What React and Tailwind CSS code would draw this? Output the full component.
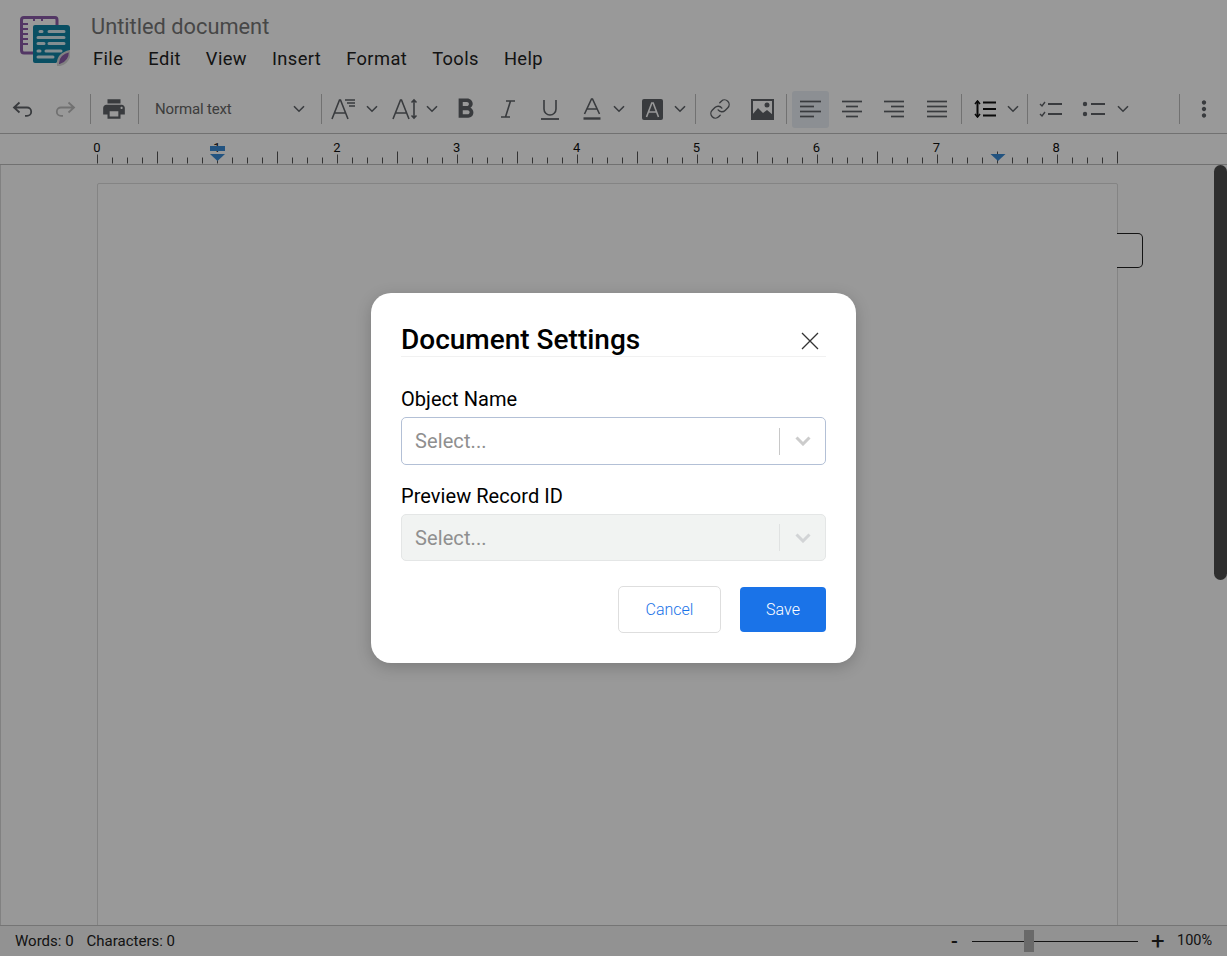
import React from "react";
import { MdPrint, MdFormatBold, MdMoreVert } from "react-icons/md";
import { Link as LinkIcon } from "lucide-react";

const ic = "#5f6368";
const Sep = ({ className = "" }) => <div className={`h-[30px] w-px shrink-0 bg-[#bdbdbd] ${className}`} />;
const Chev = ({ className = "" }) => (
  <svg viewBox="0 0 12 8" className={`h-2 w-3 shrink-0 ${className}`} fill="none" stroke="#5f6368" strokeWidth="1.6"><path d="M1 1.2 6 6.2 11 1.2" /></svg>
);

function Logo() {
  return (
    <svg viewBox="0 0 50 50" className="h-[50px] w-[50px] shrink-0">
      <path d="M1.500 34V4Q1.500 1.500 4 1.500H35Q37 1.500 37 4V9" fill="none" stroke="#8a5ca8" strokeWidth="3" />
      <path d="M1.500 34Q1.500 37 4 37H13" fill="none" stroke="#8a5ca8" strokeWidth="3" />
      <g stroke="#8a5ca8" strokeWidth="2"><path d="M1 8h7M1 13h7M1 18h7M1 23h7M1 28h7M14 1v4M22 1v4" /></g>
      <path d="M13 11Q13 9 15 9H47Q50 9 50 12V34L36 47H15Q13 47 13 45Z" fill="#0f84a6" />
      <g stroke="#fff" strokeOpacity="0.85" strokeWidth="3" strokeLinecap="round" fill="none">
        <path d="M20 15.500h2M29 15.500h15M18 21.500h26M29 27.500h15M18 27.500h6M18 35h2M26 35h15M18 41h15" />
      </g>
      <path d="M38 49Q37 38 50 35Q50 46 40 49Z" fill="#8a5ca8" stroke="#d8d8d8" strokeWidth="2" />
    </svg>
  );
}

function Ruler() {
  const ticks = [];
  for (let i = 0; i <= 68; i++) {
    const x = 97 + i * 15;
    const h = i % 8 === 0 ? 9 : i % 4 === 0 ? 12 : 6;
    ticks.push(<path key={i} d={`M${x + 0.5} ${29.5 - h}V29.5`} stroke="#555" strokeWidth="1" />);
  }
  return (
    <svg width="1227" height="30" className="block">
      {ticks}
      {[0, 1, 2, 3, 4, 5, 6, 7, 8].map((n) => (
        <text key={n} x={97 + n * 119.9} y="17.500" textAnchor="middle" fontSize="13" fontFamily="Roboto, sans-serif" fill="#111">{n}</text>
      ))}
      <rect x="210" y="12" width="15" height="5" fill="#3a8ad6" />
      <path d="M210 20H225L217.500 27Z" fill="#3a8ad6" />
      <path d="M990.500 20H1005.500L998 27Z" fill="#3a8ad6" />
    </svg>
  );
}

const Cell = ({ className = "", children }) => <div className={`flex h-[38px] shrink-0 items-center justify-center ${className}`}>{children}</div>;

const Align = ({ lines }) => (
  <svg viewBox="0 0 22 18" className="h-[18px] w-[22px]" stroke={ic} strokeWidth="1.7" fill="none">
    {lines.map(([a, b], i) => <path key={i} d={`M${a} ${1.5 + i * 5}H${b}`} />)}
  </svg>
);

function Toolbar() {
  return (
    <div className="flex h-[43px] items-center border-b border-[#bdbdbd] pb-[6px] pl-[2px]">
      <Cell className="w-[42px]">
        <svg viewBox="0 0 22 16" className="h-4 w-[22px]" fill="none" stroke={ic} strokeWidth="1.8"><path d="M7.500 1.500 2 6.500l5.500 5M2 6.500h13a4.200 4.200 0 0 1 0 8.400h-2" /></svg>
      </Cell>
      <Cell className="w-[42px]">
        <svg viewBox="0 0 22 16" className="h-4 w-[22px] -scale-x-100" fill="none" stroke="#bdbdbd" strokeWidth="1.8"><path d="M7.500 1.500 2 6.500l5.500 5M2 6.500h13a4.200 4.200 0 0 1 0 8.400h-2" /></svg>
      </Cell>
      <Sep className="ml-[4px] w-[2px]" />
      <Cell className="w-[46px]"><MdPrint size={26} color={ic} /></Cell>
      <Sep className="ml-px" />
      <div className="flex h-[38px] w-[182px] shrink-0 items-center justify-between pl-4 pr-4">
        <span className="text-[15px] tracking-[-0.15px] text-[#666]">Normal text</span>
        <Chev />
      </div>
      <Sep />
      <Cell className="w-[42px] pl-[2px]">
        <svg viewBox="0 0 26 22" className="h-[22px] w-[26px]" fill="none" stroke={ic} strokeWidth="1.6"><path d="M1 21 8.500 2h1L17 21M4 15h11" /><path d="M14 2h10M16 5h8M18 8h6" /></svg>
      </Cell>
      <Cell className="w-[16px]"><Chev /></Cell>
      <Cell className="w-[42px] pl-2">
        <svg viewBox="0 0 26 22" className="h-[22px] w-[26px]" fill="none" stroke={ic} strokeWidth="1.6"><path d="M1 21 8.500 2h1L17 21M4 15h11" /><path d="M22 2V20M19.500 4.500 22 2l2.500 2.500M19.500 17.500 22 20l2.500-2.500" /></svg>
      </Cell>
      <Cell className="ml-[2px] w-[16px]"><Chev /></Cell>
      <Cell className="ml-[4px] w-[42px]"><MdFormatBold size={33} color={ic} /></Cell>
      <Cell className="w-[43px]">
        <svg viewBox="0 0 16 18" className="h-[18px] w-4" fill="none" stroke={ic} strokeWidth="1.6"><path d="M6 1h9M1 17h9M10.500 1 5.500 17" /></svg>
      </Cell>
      <Cell className="w-[42px]">
        <svg viewBox="0 0 18 21" className="h-[21px] w-[18px]" fill="none" stroke={ic} strokeWidth="1.6"><path d="M3 1v9a6 6 0 0 0 12 0V1" /><path d="M0 20h18" strokeWidth="1.8" /></svg>
      </Cell>
      <Cell className="w-[40px] pl-[2px]">
        <svg viewBox="0 0 20 22" className="h-[22px] w-5" fill="none" stroke={ic}><path strokeWidth="1.6" d="M2.500 16 9.500 1h1l7 15M5 11h10" /><path strokeWidth="2.400" d="M1.500 20.500h17" /></svg>
      </Cell>
      <Cell className="w-[16px]"><Chev /></Cell>
      <Cell className="w-[46px] pl-[4px]">
        <svg viewBox="0 0 21 21" className="h-[21px] w-[21px]"><rect width="21" height="21" rx="2" fill="#5f6368" /><path d="M4.500 18 9.800 4h1.400l5.300 14M6.500 13h8" fill="none" stroke="#fff" strokeWidth="1.6" /></svg>
      </Cell>
      <Cell className="w-[14px]"><Chev /></Cell>
      <Sep className="ml-[8px]" />
      <Cell className="w-[46px] pl-px"><LinkIcon size={22} color={ic} strokeWidth={1.5} /></Cell>
      <Cell className="w-[44px] pr-[4px]">
        <svg viewBox="0 0 23 21" className="h-[21px] w-[23px]"><path d="M1 1h21v19H1Z" fill="none" stroke="#5f6368" strokeWidth="2" /><path d="M1 20V16L7 9l5 5 4-3 6 5v4Z" fill="#5f6368" /><circle cx="16" cy="6" r="2.500" fill="#5f6368" /></svg>
      </Cell>
      <Sep />
      <div className="ml-[5px] flex h-[37px] w-[37px] shrink-0 items-center justify-center rounded-[3px] bg-[#eaeff5]"><Align lines={[[0, 21], [0, 14], [0, 21], [0, 14]]} /></div>
      <Cell className="w-[46px]"><Align lines={[[1, 21], [5, 17], [1, 21], [5, 17]]} /></Cell>
      <Cell className="w-[38px]"><Align lines={[[1, 21], [8, 21], [1, 21], [8, 21]]} /></Cell>
      <Cell className="w-[47px]"><Align lines={[[1, 21], [1, 21], [1, 21], [1, 21]]} /></Cell>
      <Sep className="ml-px" />
      <Cell className="w-[42px] pl-1">
        <svg viewBox="0 0 22 18" className="h-[18px] w-[22px]" fill="none" stroke="#111" strokeWidth="2"><path d="M3.500 1v16" /><path strokeWidth="1.6" d="M1 4 3.500 1 6 4M1 14l2.500 3L6 14" /><path d="M9 2.500h13M9 9h13M9 15.500h13" /></svg>
      </Cell>
      <Cell className="ml-[2px] w-[14px]"><Chev /></Cell>
      <Cell className="w-[7px]" />
      <Sep />
      <Cell className="w-[45px]">
        <svg viewBox="0 0 24 16" className="h-4 w-6" fill="none" stroke={ic} strokeWidth="2"><path d="M9 3h14M9 13h14" /><path strokeWidth="1.400" d="M1 3l2 2 3-4M1 13l2 2 3-4" /></svg>
      </Cell>
      <Cell className="w-[41px]">
        <svg viewBox="0 0 24 16" className="h-4 w-6" fill={ic}><circle cx="3" cy="3" r="2.200" /><circle cx="3" cy="13" r="2.200" /><rect x="9" y="2" width="14" height="2" /><rect x="9" y="12" width="14" height="2" /></svg>
      </Cell>
      <Cell className="w-[18px]"><Chev /></Cell>
      <Cell className="w-[47px]" />
      <Sep />
      <Cell className="w-[47px]"><MdMoreVert size={26} color={ic} /></Cell>
    </div>
  );
}

function Field({ label, disabled, boxClass, gapClass }) {
  return (
    <div className={gapClass}>
      <div className="text-[20px] leading-[22px] tracking-[0.05px] text-black">{label}</div>
      <div className={`mt-[7px] flex items-center rounded-[5px] border ${boxClass} ${disabled ? "border-[#e4e6e6] bg-[#f1f3f2]" : "border-[#b3c0d6] bg-white"}`}>
        <span className="ml-[13px] flex-1 text-[20px] tracking-[0.1px] text-[#8f8f8f]">Select...</span>
        <div className={`h-[27px] w-px ${disabled ? "bg-[#e0e2e2]" : "bg-[#c8c8c8]"}`} />
        <div className="flex w-[45px] justify-center">
          <svg viewBox="0 0 16 10" className="h-[10px] w-4" fill="none" stroke={disabled ? "#d2d4d6" : "#cccccc"} strokeWidth="3"><path d="M1.500 1.500 8 8l6.500-6.500" /></svg>
        </div>
      </div>
    </div>
  );
}

export default function App() {
  return (
    <div className="relative flex h-screen w-full flex-col overflow-hidden bg-white font-['Roboto',sans-serif]">
      <header className="flex h-[91px] shrink-0 items-start pl-5 pt-4">
        <Logo />
        <div className="-mt-[3px] ml-[21px]">
          <div className="text-[21.8px] leading-[28px] text-[#777]">Untitled document</div>
          <nav className="ml-[2px] mt-[6px] flex gap-[25px] text-[18.3px] leading-[24px] tracking-[0.4px] text-[#222]">
            <span>File</span><span>Edit</span><span>View</span><span>Insert</span><span>Format</span><span>Tools</span><span>Help</span>
          </nav>
        </div>
      </header>
      <Toolbar />
      <div className="h-[31px] shrink-0 border-b border-[#bdbdbd]"><Ruler /></div>
      <main className="relative flex min-h-0 flex-1 overflow-hidden border-l border-[#d8d8d8] bg-[#fdfdfd] pl-[96px] pt-[18px]">
        <div className="h-[800px] w-[1021px] shrink-0 rounded-t-[2px] border border-[#dcdcdc] bg-white" />
        <div className="absolute left-[1116px] top-[68px] h-[35px] w-[26px] rounded-r-[5px] border border-l-0 border-[#222] bg-white" />
        <div className="absolute left-[1213px] top-0 h-[415px] w-[13px] rounded-full bg-[#4e4e4e]" />
      </main>
      <footer className="flex h-[31px] shrink-0 items-center border-t border-[#c4c4c4] bg-[#f4f4f4] px-[15px] text-[15px] text-[#222]">
        <span>Words: 0</span>
        <span className="ml-[13px]">Characters: 0</span>
        <div className="ml-auto flex items-center">
          <span className="w-[8px] text-[20px] font-medium leading-none">-</span>
          <div className="relative ml-[13px] h-px w-[166px] bg-[#222]">
            <div className="absolute left-[52px] top-[-11px] h-[22px] w-[10px] bg-[#b0b0b0]" />
          </div>
          <span className="ml-[13px] w-[14px] text-[24px] leading-none">+</span>
          <span className="ml-[12px] w-[35px] text-[14.5px]">100%</span>
        </div>
      </footer>

      <div className="absolute inset-0 flex items-center justify-center bg-black/40">
        <div className="h-[370px] w-[485px] rounded-[20px] bg-white px-[30px] shadow-[0_4px_16px_rgba(0,0,0,0.2)]">
          <div className="flex h-[64px] items-end justify-between border-b border-[#f1f1f1]">
            <h2 className="text-[28px] font-medium leading-[32px] text-black">Document Settings</h2>
            <svg viewBox="0 0 18 18" className="mb-[6px] mr-[7px] h-[18px] w-[18px]" fill="none" stroke="#333" strokeWidth="1.3"><path d="M1 1 17 17M17 1 1 17" /></svg>
          </div>
          <Field label="Object Name" gapClass="mt-[31px]" boxClass="h-[48px]" />
          <Field label="Preview Record ID" disabled gapClass="mt-[20px]" boxClass="h-[47px]" />
          <div className="mt-[25px] flex items-center justify-end gap-[19px]">
            <button className="h-[47px] w-[103px] rounded-[5px] border border-[#dedede] bg-white text-[16px] font-light text-[#1a73e8]">Cancel</button>
            <button className="h-[45px] w-[86px] rounded-[4px] bg-[#1a73e8] text-[16px] font-light text-white">Save</button>
          </div>
        </div>
      </div>
    </div>
  );
}
